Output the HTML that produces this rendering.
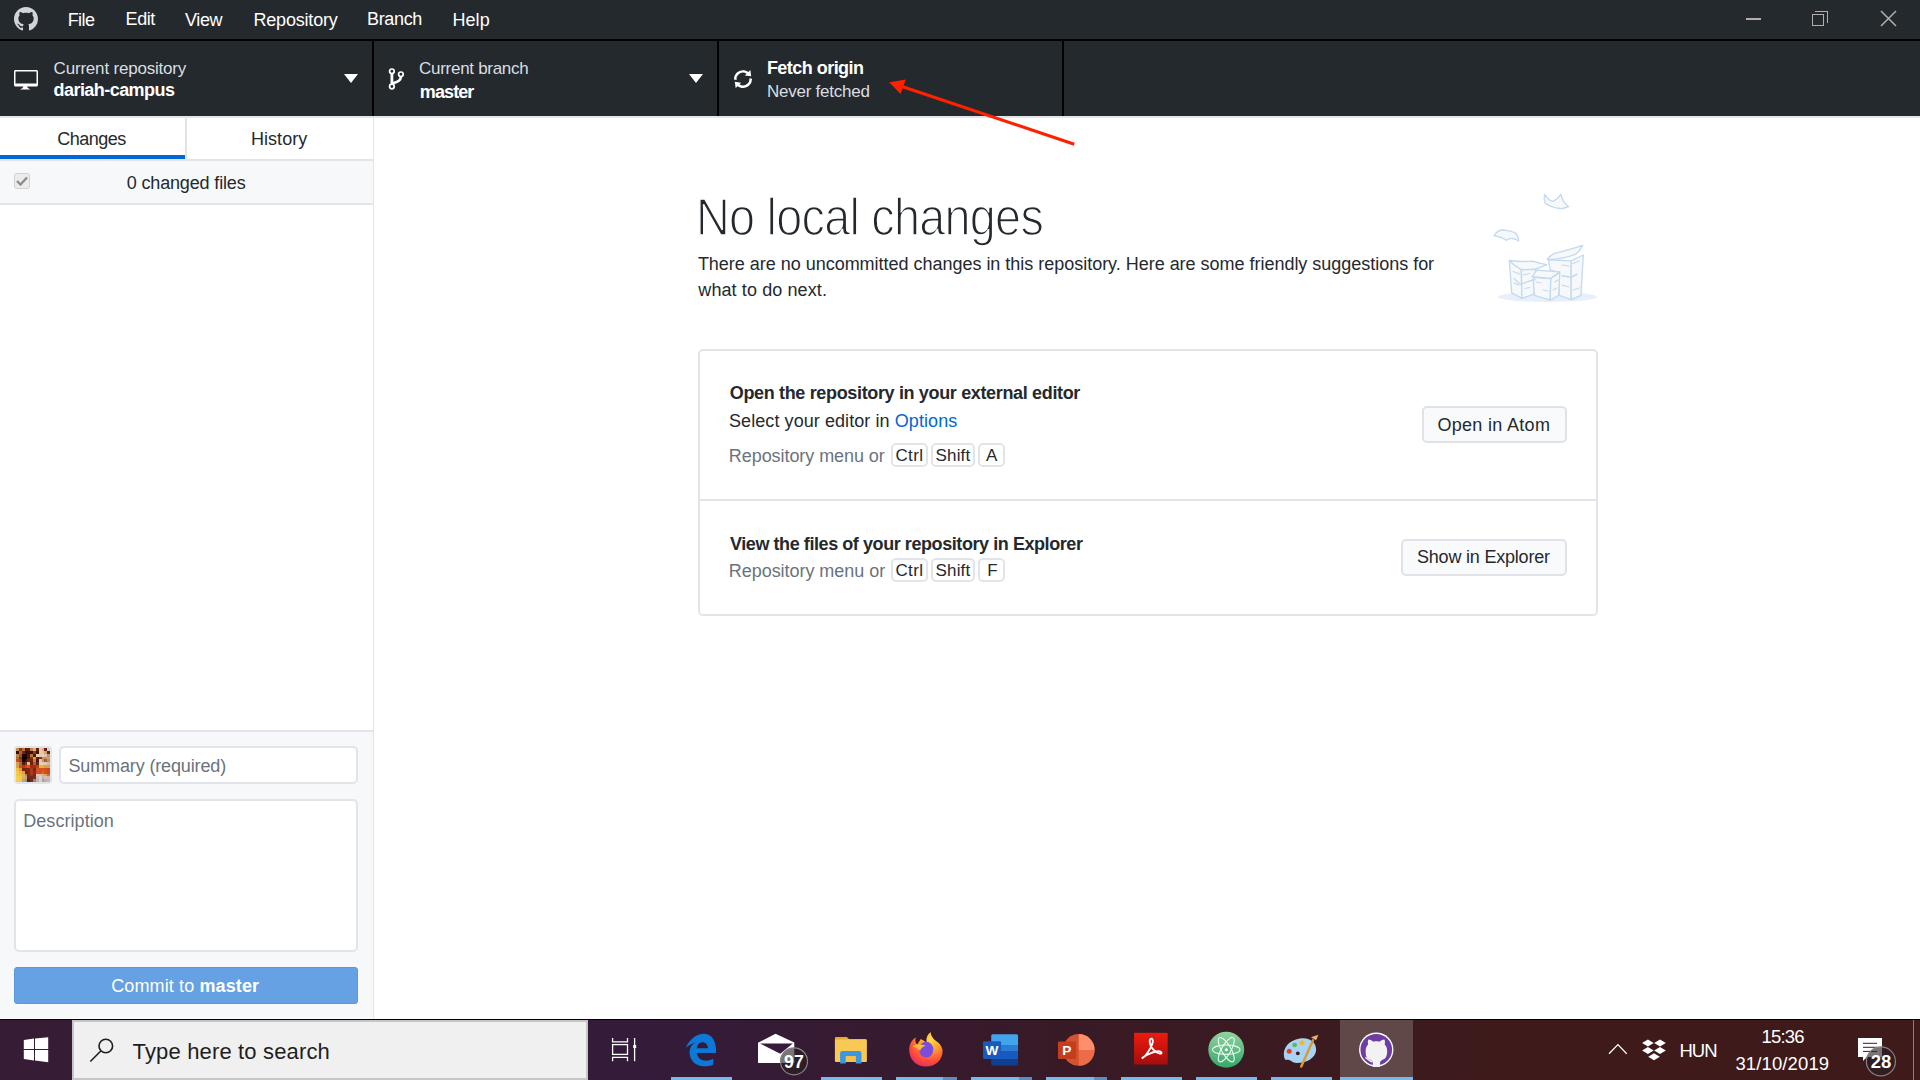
<!DOCTYPE html>
<html><head><meta charset="utf-8">
<style>
*{margin:0;padding:0;box-sizing:border-box}
html,body{width:1920px;height:1080px;overflow:hidden;background:#fff;font-family:"Liberation Sans",sans-serif}
.a{position:absolute;white-space:nowrap;line-height:1}
.r{position:absolute}
.menu{color:#fff;font-size:18.5px}
.tt1{color:#dadee2;font-size:17px}
.tt2{color:#fff;font-size:18.5px;font-weight:bold}
.dk{color:#24292e;font-size:18.5px}
.gr{color:#6a737d;font-size:18.5px}
.kbd{position:absolute;border:2px solid #e1e4e8;border-radius:5px;background:#fff}
.btn{position:absolute;border:2px solid #dfe2e6;border-radius:5px;background:#f9fafb}
.uline{position:absolute;top:1077px;height:3px;background:#76b9ed}
.uline2{position:absolute;top:1077px;height:3px;background:#5b8dc4}
</style></head><body>
<!-- title bar -->
<div class="r" style="left:0;top:0;width:1920px;height:39px;background:#24292e"></div>
<div class="r" style="left:0;top:39px;width:1920px;height:2px;background:#000"></div>
<!-- toolbar -->
<div class="r" style="left:0;top:41px;width:1920px;height:75px;background:#24292e"></div>
<div class="r" style="left:372px;top:41px;width:2px;height:75px;background:#000"></div>
<div class="r" style="left:717px;top:41px;width:2px;height:75px;background:#000"></div>
<div class="r" style="left:1062px;top:41px;width:2px;height:75px;background:#000"></div>
<div class="r" style="left:0;top:116px;width:1920px;height:2px;background:#e1e4e8"></div>

<!-- github logo -->
<svg class="r" style="left:14px;top:7px" width="24" height="24" viewBox="0 0 16 16"><path fill="#d1d5da" d="M8 0C3.58 0 0 3.58 0 8c0 3.54 2.29 6.53 5.47 7.59.4.07.55-.17.55-.38 0-.19-.01-.82-.01-1.49-2.01.37-2.53-.49-2.69-.94-.09-.23-.48-.94-.82-1.13-.28-.15-.68-.52-.01-.53.63-.01 1.080.58 1.23.82.72 1.21 1.87.87 2.33.66.07-.52.28-.87.51-1.07-1.78-.2-3.64-.89-3.64-3.95 0-.87.31-1.59.82-2.15-.08-.2-.36-1.02.08-2.12 0 0 .67-.21 2.2.82.64-.18 1.32-.27 2-.27.68 0 1.36.09 2 .27 1.53-1.04 2.2-.82 2.2-.82.44 1.1.16 1.92.08 2.12.51.56.82 1.27.82 2.15 0 3.07-1.87 3.750-3.65 3.95.29.25.54.73.54 1.48 0 1.070-.01 1.93-.01 2.2 0 .21.15.46.55.38A8.013 8.013 0 0016 8c0-4.42-3.58-8-8-8z"></path></svg>

<div class="a menu" style="left: 67.7px; top: 10.9px; letter-spacing: -0.6px; font-size: 18px; visibility: visible;">File</div>
<div class="a menu" style="left: 125.6px; top: 10.45px; letter-spacing: -0.44px; font-size: 18px; visibility: visible;">Edit</div>
<div class="a menu" style="left: 185px; top: 11.2px; letter-spacing: -0.367px; font-size: 18px; visibility: visible;">View</div>
<div class="a menu" style="left: 253.5px; top: 10.6px; letter-spacing: -0.199px; font-size: 18px; visibility: visible;">Repository</div>
<div class="a menu" style="left: 367px; top: 10.45px; letter-spacing: -0.348px; font-size: 18px; visibility: visible;">Branch</div>
<div class="a menu" style="left: 452.5px; top: 10.85px; letter-spacing: 0.05px; font-size: 18px; visibility: visible;">Help</div>

<!-- window controls -->
<div class="r" style="left:1746px;top:18px;width:15px;height:2px;background:#b4adad"></div>
<div class="r" style="left:1812px;top:14px;width:12px;height:12px;border:1.5px solid #b4adad"></div>
<div class="r" style="left:1815px;top:11px;width:13px;height:12px;border-top:1.5px solid #b4adad;border-right:1.5px solid #b4adad"></div>
<svg class="r" style="left:1880px;top:10px" width="17" height="17" viewBox="0 0 17 17"><path d="M1 1L16 16M16 1L1 16" stroke="#b4adad" stroke-width="1.5"></path></svg>

<!-- toolbar items -->
<svg class="r" style="left:14px;top:67px" width="24" height="24" viewBox="0 0 16 16"><path fill="#fff" d="M15 2H1c-.55 0-1 .45-1 1v9c0 .55.45 1 1 1h5.34c-.25.61-.86 1.390-2.34 2h7c-1.48-.61-2.09-1.39-2.34-2H15c.55 0 1-.45 1-1V3c0-.55-.45-1-1-1zm0 9H1V3h14v8z"></path></svg>
<div class="a tt1" style="left: 53.6px; top: 60px; letter-spacing: -0.196px; visibility: visible;">Current repository</div>
<div class="a tt2" style="left: 53.6px; top: 81.35px; letter-spacing: -0.56px; font-size: 18px; visibility: visible;">dariah-campus</div>
<svg class="r" style="left:344px;top:74px" width="14" height="9" viewBox="0 0 14 9"><path d="M0 0L14 0L7 9Z" fill="#fff"></path></svg>

<svg class="r" style="left:380px;top:60px" width="40" height="40" viewBox="380 60 40 40"><g fill="none" stroke="#fff"><circle cx="391.9" cy="71.3" r="2.3" stroke-width="1.7"></circle><circle cx="400.9" cy="74.3" r="2.3" stroke-width="1.7"></circle><circle cx="391.9" cy="86.5" r="2.3" stroke-width="1.7"></circle><path d="M391.9,73.5V84.3" stroke-width="2.8"></path><path d="M400.9,76.5C400.9,81 397,81.8 392.2,83.5" stroke-width="2.6"></path></g></svg>
<div class="a tt1" style="left: 419.1px; top: 59.85px; letter-spacing: -0.292px; visibility: visible;">Current branch</div>
<div class="a tt2" style="left: 419.8px; top: 82.7px; letter-spacing: -0.894px; font-size: 18px; visibility: visible;">master</div>
<svg class="r" style="left:689px;top:74px" width="14" height="9" viewBox="0 0 14 9"><path d="M0 0L14 0L7 9Z" fill="#fff"></path></svg>

<svg class="r" style="left:734px;top:70px" width="18" height="19" viewBox="0 0 12 12.6"><path fill="#fff" d="M10.24 5.4a4.15 4.15 0 01-1.2 3.6 4.346 4.346 0 01-5.41.54L4.8 8.4.5 7.8l.6 4.2 1.31-1.26c2.360 1.74 5.7 1.57 7.84-.54a5.876 5.876 0 001.74-4.46l-1.75-.34zM2.96 3a4.346 4.346 0 015.41-.54L7.2 3.6l4.3.6-.6-4.2-1.31 1.26c-2.36-1.74-5.7-1.57-7.85.54C.5 3.03-.06 4.65.01 6.26l1.75.35A4.17 4.17 0 012.96 3z"></path></svg>
<div class="a tt2" style="left: 766.9px; top: 59.12px; letter-spacing: -0.532px; font-size: 18px; visibility: visible;">Fetch origin</div>
<div class="a tt1" style="left: 766.9px; top: 83.45px; letter-spacing: -0.231px; visibility: visible;">Never fetched</div>

<!-- red arrow -->
<svg class="r" style="left:880px;top:70px" width="210" height="90" viewBox="880 70 210 90"><path d="M1074.3,144.2L902,86.5" stroke="#fd2100" stroke-width="3.1" stroke-linecap="butt"></path><path d="M889.1,82.2L905.8,79.4L900.6,93.9Z" fill="#fd2100"></path></svg>

<!-- sidebar -->
<div class="r" style="left:373px;top:117px;width:1px;height:902px;background:#e1e4e8"></div>
<div class="r" style="left:185px;top:118px;width:2px;height:41px;background:#e1e4e8"></div>
<div class="r" style="left:0;top:155px;width:185px;height:4px;background:#0366d6"></div>
<div class="r" style="left:0;top:159px;width:373px;height:2px;background:#e1e4e8"></div>
<div class="a dk" style="left: 57.2px; top: 130px; letter-spacing: -0.49px; font-size: 18px; visibility: visible;">Changes</div>
<div class="a dk" style="left: 251px; top: 130px; letter-spacing: 0.04px; font-size: 18px; visibility: visible;">History</div>
<div class="r" style="left:0;top:161px;width:373px;height:42px;background:#f6f8fa"></div>
<div class="r" style="left:0;top:203px;width:373px;height:2px;background:#e1e4e8"></div>
<div class="r" style="left:14px;top:173px;width:16px;height:16px;border:1px solid #cfd3d7;border-radius:3px;background:#ececec"></div>
<svg class="r" style="left:16px;top:176px" width="12" height="10" viewBox="0 0 12 10"><path d="M1 5L4.5 8.5L11 1.5" stroke="#8d8d8d" stroke-width="2.4" fill="none"></path></svg>
<div class="a dk" style="left: 126.7px; top: 173.55px; letter-spacing: -0.146px; font-size: 18px; visibility: visible;">0 changed files</div>

<!-- commit area -->
<div class="r" style="left:0;top:730px;width:373px;height:2px;background:#e1e4e8"></div>
<div class="r" style="left:0;top:732px;width:373px;height:286px;background:#f6f8fa"></div>
<div class="r" style="left:14px;top:746px;width:38px;height:38px;border:2px solid #e1e4e8;border-radius:4px;background:#fff"></div><svg class="r" style="left:16px;top:748px;filter:blur(0.6px)" width="34" height="34" viewBox="0 0 12 12" preserveAspectRatio="none" shape-rendering="crispEdges"><rect x="0" y="0" width="1" height="1" fill="#c89050"></rect><rect x="1" y="0" width="1" height="1" fill="#8a3a20"></rect><rect x="2" y="0" width="1" height="1" fill="#c07030"></rect><rect x="3" y="0" width="1" height="1" fill="#4a1a10"></rect><rect x="4" y="0" width="1" height="1" fill="#5a2010"></rect><rect x="5" y="0" width="1" height="1" fill="#c08050"></rect><rect x="6" y="0" width="1" height="1" fill="#e0b080"></rect><rect x="7" y="0" width="1" height="1" fill="#5a2010"></rect><rect x="8" y="0" width="1" height="1" fill="#e8c8a0"></rect><rect x="9" y="0" width="1" height="1" fill="#d8b090"></rect><rect x="10" y="0" width="1" height="1" fill="#6a2010"></rect><rect x="11" y="0" width="1" height="1" fill="#e0d0c0"></rect><rect x="0" y="1" width="1" height="1" fill="#2a1008"></rect><rect x="1" y="1" width="1" height="1" fill="#b06830"></rect><rect x="2" y="1" width="1" height="1" fill="#6a2a18"></rect><rect x="3" y="1" width="1" height="1" fill="#3a1008"></rect><rect x="4" y="1" width="1" height="1" fill="#3a1008"></rect><rect x="5" y="1" width="1" height="1" fill="#3a1008"></rect><rect x="6" y="1" width="1" height="1" fill="#8a3a20"></rect><rect x="7" y="1" width="1" height="1" fill="#3a1010"></rect><rect x="8" y="1" width="1" height="1" fill="#e8c8a0"></rect><rect x="9" y="1" width="1" height="1" fill="#e8c8a0"></rect><rect x="10" y="1" width="1" height="1" fill="#d0a070"></rect><rect x="11" y="1" width="1" height="1" fill="#6a2010"></rect><rect x="0" y="2" width="1" height="1" fill="#c08040"></rect><rect x="1" y="2" width="1" height="1" fill="#a05020"></rect><rect x="2" y="2" width="1" height="1" fill="#200505"></rect><rect x="3" y="2" width="1" height="1" fill="#200505"></rect><rect x="4" y="2" width="1" height="1" fill="#4a1810"></rect><rect x="5" y="2" width="1" height="1" fill="#c07030"></rect><rect x="6" y="2" width="1" height="1" fill="#4a1810"></rect><rect x="7" y="2" width="1" height="1" fill="#e8d0b0"></rect><rect x="8" y="2" width="1" height="1" fill="#e8c8b0"></rect><rect x="9" y="2" width="1" height="1" fill="#f0c8c0"></rect><rect x="10" y="2" width="1" height="1" fill="#e0c0a0"></rect><rect x="11" y="2" width="1" height="1" fill="#c09070"></rect><rect x="0" y="3" width="1" height="1" fill="#b07030"></rect><rect x="1" y="3" width="1" height="1" fill="#902818"></rect><rect x="2" y="3" width="1" height="1" fill="#100000"></rect><rect x="3" y="3" width="1" height="1" fill="#100000"></rect><rect x="4" y="3" width="1" height="1" fill="#4a1810"></rect><rect x="5" y="3" width="1" height="1" fill="#8a3018"></rect><rect x="6" y="3" width="1" height="1" fill="#e0a030"></rect><rect x="7" y="3" width="1" height="1" fill="#5a2010"></rect><rect x="8" y="3" width="1" height="1" fill="#7a3020"></rect><rect x="9" y="3" width="1" height="1" fill="#c09070"></rect><rect x="10" y="3" width="1" height="1" fill="#c89060"></rect><rect x="11" y="3" width="1" height="1" fill="#d0a060"></rect><rect x="0" y="4" width="1" height="1" fill="#c05028"></rect><rect x="1" y="4" width="1" height="1" fill="#a04020"></rect><rect x="2" y="4" width="1" height="1" fill="#100000"></rect><rect x="3" y="4" width="1" height="1" fill="#3a1008"></rect><rect x="4" y="4" width="1" height="1" fill="#6a2810"></rect><rect x="5" y="4" width="1" height="1" fill="#6a2810"></rect><rect x="6" y="4" width="1" height="1" fill="#c08040"></rect><rect x="7" y="4" width="1" height="1" fill="#4a1810"></rect><rect x="8" y="4" width="1" height="1" fill="#e0c8b0"></rect><rect x="9" y="4" width="1" height="1" fill="#c09060"></rect><rect x="10" y="4" width="1" height="1" fill="#a06040"></rect><rect x="11" y="4" width="1" height="1" fill="#c09060"></rect><rect x="0" y="5" width="1" height="1" fill="#d8a050"></rect><rect x="1" y="5" width="1" height="1" fill="#b07030"></rect><rect x="2" y="5" width="1" height="1" fill="#5a1a10"></rect><rect x="3" y="5" width="1" height="1" fill="#7a3018"></rect><rect x="4" y="5" width="1" height="1" fill="#e8c070"></rect><rect x="5" y="5" width="1" height="1" fill="#6a2010"></rect><rect x="6" y="5" width="1" height="1" fill="#b06030"></rect><rect x="7" y="5" width="1" height="1" fill="#6a2010"></rect><rect x="8" y="5" width="1" height="1" fill="#e0d0c0"></rect><rect x="9" y="5" width="1" height="1" fill="#e8d0b0"></rect><rect x="10" y="5" width="1" height="1" fill="#e0c8a8"></rect><rect x="11" y="5" width="1" height="1" fill="#d8b890"></rect><rect x="0" y="6" width="1" height="1" fill="#e0a040"></rect><rect x="1" y="6" width="1" height="1" fill="#b06030"></rect><rect x="2" y="6" width="1" height="1" fill="#c03020"></rect><rect x="3" y="6" width="1" height="1" fill="#e04020"></rect><rect x="4" y="6" width="1" height="1" fill="#e05030"></rect><rect x="5" y="6" width="1" height="1" fill="#c02010"></rect><rect x="6" y="6" width="1" height="1" fill="#c02010"></rect><rect x="7" y="6" width="1" height="1" fill="#a05020"></rect><rect x="8" y="6" width="1" height="1" fill="#e8b030"></rect><rect x="9" y="6" width="1" height="1" fill="#e8b030"></rect><rect x="10" y="6" width="1" height="1" fill="#d8a050"></rect><rect x="11" y="6" width="1" height="1" fill="#d0a070"></rect><rect x="0" y="7" width="1" height="1" fill="#f5c040"></rect><rect x="1" y="7" width="1" height="1" fill="#e0a030"></rect><rect x="2" y="7" width="1" height="1" fill="#7a2010"></rect><rect x="3" y="7" width="1" height="1" fill="#7a2810"></rect><rect x="4" y="7" width="1" height="1" fill="#7a2810"></rect><rect x="5" y="7" width="1" height="1" fill="#a04020"></rect><rect x="6" y="7" width="1" height="1" fill="#7a2818"></rect><rect x="7" y="7" width="1" height="1" fill="#d85020"></rect><rect x="8" y="7" width="1" height="1" fill="#d85020"></rect><rect x="9" y="7" width="1" height="1" fill="#d85020"></rect><rect x="10" y="7" width="1" height="1" fill="#d05020"></rect><rect x="11" y="7" width="1" height="1" fill="#c84820"></rect><rect x="0" y="8" width="1" height="1" fill="#f8c848"></rect><rect x="1" y="8" width="1" height="1" fill="#f0b840"></rect><rect x="2" y="8" width="1" height="1" fill="#e0a040"></rect><rect x="3" y="8" width="1" height="1" fill="#6a2010"></rect><rect x="4" y="8" width="1" height="1" fill="#7a2810"></rect><rect x="5" y="8" width="1" height="1" fill="#c03020"></rect><rect x="6" y="8" width="1" height="1" fill="#8a3018"></rect><rect x="7" y="8" width="1" height="1" fill="#d85020"></rect><rect x="8" y="8" width="1" height="1" fill="#d05020"></rect><rect x="9" y="8" width="1" height="1" fill="#e06030"></rect><rect x="10" y="8" width="1" height="1" fill="#d05020"></rect><rect x="11" y="8" width="1" height="1" fill="#c84820"></rect><rect x="0" y="9" width="1" height="1" fill="#f8c848"></rect><rect x="1" y="9" width="1" height="1" fill="#f0c040"></rect><rect x="2" y="9" width="1" height="1" fill="#e8b040"></rect><rect x="3" y="9" width="1" height="1" fill="#c08060"></rect><rect x="4" y="9" width="1" height="1" fill="#7a2810"></rect><rect x="5" y="9" width="1" height="1" fill="#a03020"></rect><rect x="6" y="9" width="1" height="1" fill="#7a2818"></rect><rect x="7" y="9" width="1" height="1" fill="#e0c8b0"></rect><rect x="8" y="9" width="1" height="1" fill="#d8c0b0"></rect><rect x="9" y="9" width="1" height="1" fill="#d0b0a0"></rect><rect x="10" y="9" width="1" height="1" fill="#e0a040"></rect><rect x="11" y="9" width="1" height="1" fill="#c87040"></rect><rect x="0" y="10" width="1" height="1" fill="#f8d050"></rect><rect x="1" y="10" width="1" height="1" fill="#f8c848"></rect><rect x="2" y="10" width="1" height="1" fill="#d8b060"></rect><rect x="3" y="10" width="1" height="1" fill="#c0a090"></rect><rect x="4" y="10" width="1" height="1" fill="#6a2818"></rect><rect x="5" y="10" width="1" height="1" fill="#7a2818"></rect><rect x="6" y="10" width="1" height="1" fill="#7a3020"></rect><rect x="7" y="10" width="1" height="1" fill="#d0b8b0"></rect><rect x="8" y="10" width="1" height="1" fill="#e0d0c8"></rect><rect x="9" y="10" width="1" height="1" fill="#c0b0b0"></rect><rect x="10" y="10" width="1" height="1" fill="#d8c0b0"></rect><rect x="11" y="10" width="1" height="1" fill="#c8b8b0"></rect><rect x="0" y="11" width="1" height="1" fill="#f8d050"></rect><rect x="1" y="11" width="1" height="1" fill="#f0c848"></rect><rect x="2" y="11" width="1" height="1" fill="#c0a090"></rect><rect x="3" y="11" width="1" height="1" fill="#a09090"></rect><rect x="4" y="11" width="1" height="1" fill="#5a2018"></rect><rect x="5" y="11" width="1" height="1" fill="#6a3020"></rect><rect x="6" y="11" width="1" height="1" fill="#a08080"></rect><rect x="7" y="11" width="1" height="1" fill="#c0b0b0"></rect><rect x="8" y="11" width="1" height="1" fill="#e0d0c0"></rect><rect x="9" y="11" width="1" height="1" fill="#a0a0b0"></rect><rect x="10" y="11" width="1" height="1" fill="#c0b0a8"></rect><rect x="11" y="11" width="1" height="1" fill="#c8b8b0"></rect></svg>
<div class="r" style="left:59px;top:746px;width:299px;height:38px;border:2px solid #e1e4e8;border-radius:5px;background:#fff"></div>
<div class="a gr" style="left: 68.5px; top: 757.05px; letter-spacing: -0.139px; font-size: 18px; visibility: visible;">Summary (required)</div>
<div class="r" style="left:14px;top:799px;width:344px;height:153px;border:2px solid #e1e4e8;border-radius:5px;background:#fff"></div>
<div class="a gr" style="left: 23.2px; top: 812.2px; letter-spacing: 0.062px; font-size: 18px; visibility: visible;">Description</div>
<div class="r" style="left:14px;top:967px;width:344px;height:37px;border-radius:3px;background:#66a1e3;border:1px solid #5c98e0"></div>
<div class="a" style="left: 111.2px; top: 977.2px; letter-spacing: 0.119px; color: rgb(255, 255, 255); font-size: 18px; visibility: visible;">Commit to <b>master</b></div>
<div class="r" style="left:0;top:1019px;width:1920px;height:1px;background:#000"></div>

<!-- main content -->
<div class="a" style="left:696.1px;top:192.4px;letter-spacing:-0.8px;color:#24292e;font-size:51px;transform-origin:0 0;transform:scaleX(0.917);-webkit-text-stroke:1.5px #fff">No local changes</div>
<div class="a dk" style="left: 697.9px; top: 254.55px; letter-spacing: -0.02px; font-size: 18px; visibility: visible;">There are no uncommitted changes in this repository. Here are some friendly suggestions for</div>
<div class="a dk" style="left: 698.3px; top: 281.05px; letter-spacing: 0.101px; font-size: 18px; visibility: visible;">what to do next.</div>

<div class="r" style="left:698px;top:349px;width:900px;height:267px;border:2px solid #e1e4e8;border-radius:5px"></div>
<div class="r" style="left:700px;top:499px;width:896px;height:2px;background:#e1e4e8"></div>

<div class="a dk" style="left: 729.8px; top: 383.7px; letter-spacing: -0.346px; font-weight: bold; font-size: 18px; visibility: visible;">Open the repository in your external editor</div>
<div class="a dk" style="left: 729px; top: 412.3px; letter-spacing: 0.075px; font-size: 18px; visibility: visible;">Select your editor in <span style="color:#0366d6">Options</span></div>
<div class="a gr" style="left: 728.8px; top: 447px; letter-spacing: -0.064px; font-size: 18px; visibility: visible;">Repository menu or</div>
<div class="kbd" style="left:891px;top:443px;width:37px;height:24px"></div>
<div class="kbd" style="left:931px;top:443px;width:44px;height:24px"></div>
<div class="kbd" style="left:978px;top:443px;width:27px;height:24px"></div>
<div class="a" style="left:895.4px;top:447.2px;color:#24292e;font-size:17px;letter-spacing:0.4px">Ctrl</div>
<div class="a" style="left:935.6px;top:447.2px;color:#24292e;font-size:17px;letter-spacing:0.15px">Shift</div>
<div class="a" style="left:986px;top:447.2px;color:#24292e;font-size:17px">A</div>
<div class="btn" style="left:1422px;top:406px;width:145px;height:37px"></div>
<div class="a dk" style="left: 1437.4px; top: 416.3px; letter-spacing: 0.311px; font-size: 18px; visibility: visible;">Open in Atom</div>

<div class="a dk" style="left: 730px; top: 534.55px; letter-spacing: -0.428px; font-weight: bold; font-size: 18px; visibility: visible;">View the files of your repository in Explorer</div>
<div class="a gr" style="left: 728.8px; top: 561.9px; letter-spacing: -0.043px; font-size: 18px; visibility: visible;">Repository menu or</div>
<div class="kbd" style="left:891px;top:558px;width:37px;height:24px"></div>
<div class="kbd" style="left:931px;top:558px;width:44px;height:24px"></div>
<div class="kbd" style="left:978px;top:558px;width:27px;height:24px"></div>
<div class="a" style="left:895.4px;top:562.1px;color:#24292e;font-size:17px;letter-spacing:0.4px">Ctrl</div>
<div class="a" style="left:935.6px;top:562.1px;color:#24292e;font-size:17px;letter-spacing:0.15px">Shift</div>
<div class="a" style="left:987.3px;top:562.1px;color:#24292e;font-size:17px">F</div>
<div class="btn" style="left:1401px;top:538.5px;width:166px;height:37px"></div>
<div class="a dk" style="left: 1417px; top: 548.4px; letter-spacing: -0.204px; font-size: 18px; visibility: visible;">Show in Explorer</div>


<!-- illustration -->
<svg class="r" style="left:1480px;top:180px" width="130" height="130" viewBox="1480 180 130 130">
<ellipse cx="1547.5" cy="296.9" rx="49.6" ry="5.1" fill="#e7f0fa"></ellipse>
<g fill="#f6f8fa" stroke="#c3d9ef" stroke-width="1.3" stroke-linejoin="round">
<path d="M1548.4,259.9 L1571.2,260.8 L1571.2,299.6 L1559.2,295.4 L1558.6,272.5 L1550.2,270.1Z"></path>
<path d="M1571.2,260.8 L1583.3,255.0 L1580.9,295.4 L1571.2,299.6Z"></path>
<path d="M1547.2,259.3 Q1552,253 1558.6,252.3 Q1572,249 1582.7,245.4 Q1580,251 1575.4,254.4 Q1560,260 1547.2,259.3Z"></path>
<path d="M1509.3,260.5 L1511.7,292.9 L1521.9,298.4 L1521.3,269.5Z"></path>
<path d="M1521.3,269.5 L1521.9,298.4 L1533.9,294.2 L1535.7,269.5Z"></path>
<path d="M1509.3,260.5 Q1521,262 1532.7,261.2 Q1540,263.5 1546.6,264.7 Q1540,268 1535.7,268.9 Q1528,269.8 1521.3,269.5 Q1514,266 1509.3,260.5Z"></path>
<path d="M1533.0,277.3 L1534.5,295.4 L1550.2,300.2 L1550.8,278.5Z"></path>
<path d="M1550.8,278.5 L1559.8,272.5 L1558.6,295.4 L1550.2,300.2Z"></path>
<path d="M1532.1,276.7 L1536.9,270.1 L1559.8,271.9 L1550.2,278.5Z"></path>
<path d="M1544.6,194.3 Q1549,201 1553,201.4 Q1558,199 1560.8,194.3 Q1563,203 1568.6,206.6 Q1562,209 1559.5,208.5 Q1551,207.5 1545.2,203.3 Q1543.5,199 1544.6,194.3Z"></path>
<path d="M1494,235.8 Q1497,230.5 1502.4,230 Q1510,230.5 1514.7,232.5 Q1518.5,235.5 1518.6,241 Q1512,236 1506.3,240.3 Q1501,236.5 1494,235.8Z"></path>
</g>
<g stroke="#c3d9ef" stroke-width="1.1" fill="none" stroke-linecap="round">
<path d="M1513,271.5L1520,274M1523,275L1530,273.5M1514,283L1519,285M1525,288.5L1530,287.5M1536,282L1541,283M1543,290L1548,291M1553,290L1557,288M1562,265L1569,266M1573,263.5L1579,261M1562,276L1569,277M1573,276L1577,274M1562,285L1569,287M1573,290L1579,288M1555,282L1558,280"></path><path d="M1514.1,278.5Q1518,283 1521.3,284.5Q1528,281 1535.7,279.7M1562.2,275.5L1571.5,277.3L1576.6,274.6" stroke-width="1.2"></path>
</g>
</svg>

<!-- taskbar -->
<div class="r" style="left:0;top:1020px;width:1920px;height:60px;background:linear-gradient(90deg,#371c35 0%,#351b38 20%,#341b3b 34%,#381a27 55%,#3e1a1b 78%,#3e1a1b 100%)"></div>
<div class="r" style="left:72px;top:1020px;width:516px;height:60px;background:#f0f0f0;border:2px solid #c6c6c6;border-right-width:2px"></div>

<!-- taskbar icons -->
<svg class="r" style="left:0;top:1020px" width="1920" height="60" viewBox="0 1020 1920 60">
<!-- windows logo -->
<g fill="#fff">
<path d="M23.8,1040 L34,1038.6 L34,1049 L23.8,1049Z"></path>
<path d="M35,1038.4 L48.2,1037.2 L48.2,1049 L35,1049Z"></path>
<path d="M23.8,1050 L34,1050 L34,1060.4 L23.8,1059Z"></path>
<path d="M35,1050 L48.2,1050 L48.2,1062.2 L35,1060.6Z"></path>
</g>
<!-- search icon -->
<g fill="none" stroke="#1e1e1e" stroke-width="1.6"><circle cx="105.8" cy="1046" r="6.8"></circle><path d="M100.8,1051 L90.3,1061.5"></path></g>
<!-- task view -->
<g fill="none" stroke="#fff" stroke-width="1.3">
<path d="M612.6,1038 V1041.8 H627.5 V1038"></path>
<rect x="612.6" y="1044.6" width="14.9" height="9.8"></rect>
<path d="M612.6,1061.2 V1057.4 H627.5 V1061.2"></path>
<path d="M634.6,1038 V1061.2"></path>
</g>
<rect x="633.2" y="1045" width="3" height="3" fill="#fff"></rect>
<!-- underlines -->
<g fill="#76b9ed">
<rect x="671" y="1077" width="61" height="3"></rect>
<rect x="821" y="1077" width="61" height="3"></rect>
<rect x="896" y="1077" width="47" height="3"></rect>
<rect x="971" y="1077" width="48" height="3"></rect>
<rect x="1046" y="1077" width="48" height="3"></rect>
<rect x="1121" y="1077" width="61" height="3"></rect>
<rect x="1196" y="1077" width="61" height="3"></rect>
<rect x="1271" y="1077" width="61" height="3"></rect>
<rect x="1340" y="1077" width="73" height="3"></rect>
</g>
<g fill="#5d8cc0">
<rect x="943" y="1077" width="14" height="3"></rect>
<rect x="1019" y="1077" width="13" height="3"></rect>
<rect x="1094" y="1077" width="13" height="3"></rect>
</g>
<rect x="1340" y="1020" width="73" height="57" fill="#614848"></rect>
<!-- edge -->
<g transform="translate(675,1025) scale(0.10417)">
<path fill="#0c78d8" fill-rule="evenodd" d="M105,215 C150,120 220,85 280,85 C360,88 398,160 395,268 L212,268 C215,320 255,342 300,342 C330,342 350,335 368,322 L368,378 C340,392 310,396 280,396 C190,396 140,330 140,262 C140,215 165,180 210,160 C170,175 130,195 105,215Z M208,222 L318,222 C312,185 290,165 262,165 C235,165 214,185 208,222Z"></path>
</g>
<!-- mail -->
<g transform="translate(675,1025) scale(0.10417)">
<path fill="#fff" d="M797,170 L965,85 L1145,168 L1145,365 L797,365Z"></path>
<path fill="#361b3b" d="M815,178 L1130,178 L1010,275Z"></path>
<circle cx="1142" cy="349" r="130" fill="#262122" fill-opacity="0.62" stroke="#8a8585" stroke-width="11"></circle>
<text x="1142" y="411" font-family="Liberation Sans" font-weight="bold" font-size="170" fill="#fff" text-anchor="middle">97</text>
</g>
<!-- explorer -->
<g transform="translate(675,1025) scale(0.10417)">
<path fill="#e6a92c" d="M1535,125 Q1535,115 1545,115 L1650,115 L1670,135 L1835,135 L1840,160 L1535,160Z"></path>
<rect x="1535" y="140" width="307" height="215" rx="10" fill="#f8ca55"></rect>
<path fill="#3a98e0" d="M1585,370 L1585,270 Q1585,250 1605,250 L1770,250 Q1790,250 1790,270 L1790,370 L1735,370 L1735,300 L1640,300 L1640,370Z"></path>
<rect x="1640" y="298" width="95" height="52" fill="#f5c04a"></rect>
</g>
<!-- firefox -->
<g transform="translate(895,1025) scale(0.10937)">
<defs>
<radialGradient id="ffg" cx="0.65" cy="0.2" r="0.9"><stop offset="0" stop-color="#ffe14a"></stop><stop offset="0.35" stop-color="#ffa02e"></stop><stop offset="0.7" stop-color="#ff4f3a"></stop><stop offset="1" stop-color="#e5216a"></stop></radialGradient>
</defs>
<path fill="url(#ffg)" d="M282,380 C190,380 130,310 130,228 C130,180 150,140 190,115 C180,150 190,170 205,180 C215,150 240,130 235,125 C260,140 270,150 290,160 C280,120 300,85 325,65 C330,110 360,140 395,160 C425,190 435,215 435,240 C435,320 370,380 282,380Z"></path>
<ellipse cx="285" cy="225" rx="65" ry="72" fill="#7b4ddc"></ellipse>
<path fill="#ffb93a" d="M160,200 C185,170 220,170 280,190 C250,200 235,215 230,235 C210,215 185,205 160,200Z"></path>
</g>
<!-- word -->
<g transform="translate(895,1025) scale(0.10937)">
<defs><linearGradient id="wdg" x1="0" y1="0" x2="0" y2="1"><stop offset="0" stop-color="#41a5ee"></stop><stop offset="0.33" stop-color="#41a5ee"></stop><stop offset="0.33" stop-color="#2b7cd3"></stop><stop offset="0.55" stop-color="#2b7cd3"></stop><stop offset="0.55" stop-color="#185abd"></stop><stop offset="0.78" stop-color="#185abd"></stop><stop offset="0.78" stop-color="#103f91"></stop><stop offset="1" stop-color="#103f91"></stop></linearGradient></defs>
<rect x="880" y="85" width="245" height="285" rx="14" fill="url(#wdg)"></rect>
<rect x="805" y="148" width="165" height="162" rx="10" fill="#185abd"></rect>
<text x="887" y="270" font-family="Liberation Sans" font-weight="bold" font-size="125" fill="#fff" text-anchor="middle">W</text>
</g>
<!-- powerpoint -->
<g transform="translate(895,1025) scale(0.10937)">
<circle cx="1680" cy="228" r="145" fill="#d35230"></circle>
<path d="M1680,83 A145,145 0 0 1 1825,228 L1680,228Z" fill="#ff8f6b"></path>
<path d="M1680,228 L1825,228 A145,145 0 0 1 1680,373Z" fill="#ed6c47"></path>
<rect x="1490" y="150" width="165" height="162" rx="10" fill="#c43e1c"></rect>
<text x="1572" y="272" font-family="Liberation Sans" font-weight="bold" font-size="125" fill="#fff" text-anchor="middle">P</text>
</g>
<!-- acrobat, atom, paint, github -->
<g transform="translate(1120,1020) scale(0.15625)">
<defs>
<linearGradient id="acg" x1="0" y1="0" x2="0" y2="1"><stop offset="0" stop-color="#ee1b0e"></stop><stop offset="1" stop-color="#a50d0d"></stop></linearGradient>
<linearGradient id="atg" x1="0" y1="0" x2="0" y2="1"><stop offset="0" stop-color="#8fd3a0"></stop><stop offset="1" stop-color="#35a86a"></stop></linearGradient>
</defs>
<rect x="90" y="82" width="215" height="203" fill="url(#acg)"></rect>
<path fill="none" stroke="#fff" stroke-width="12" d="M140,245 C165,235 205,170 210,140 C212,110 190,115 190,140 C192,175 225,210 255,215 C275,218 265,195 240,200 C200,205 150,235 140,245Z"></path>
<circle cx="680" cy="190" r="115" fill="url(#atg)"></circle>
<g fill="none" stroke="#fff" stroke-width="7" opacity="0.92">
<ellipse cx="680" cy="190" rx="88" ry="30"></ellipse>
<ellipse cx="680" cy="190" rx="88" ry="30" transform="rotate(60 680 190)"></ellipse>
<ellipse cx="680" cy="190" rx="88" ry="30" transform="rotate(-60 680 190)"></ellipse>
</g>
<circle cx="680" cy="190" r="10" fill="#fff"></circle>
<path fill="#a9d3f2" d="M1050,235 C1040,180 1080,130 1150,118 C1220,108 1260,150 1255,195 C1250,240 1200,275 1130,275 C1100,275 1090,250 1070,255 C1058,258 1052,250 1050,235Z"></path>
<circle cx="1138" cy="213" r="12" fill="#3a1a22"></circle>
<circle cx="1083" cy="200" r="16" fill="#e8402a"></circle>
<circle cx="1118" cy="160" r="15" fill="#5cb85c"></circle>
<circle cx="1165" cy="145" r="16" fill="#f0b830"></circle>
<path d="M1160,298 L1235,130" stroke="#d89a3a" stroke-width="16" stroke-linecap="round"></path>
<path d="M1222,110 L1270,95 L1255,130 Z" fill="#e6b470"></path>
<circle cx="1640" cy="190" r="110" fill="#fff"></circle>
<circle cx="1640" cy="190" r="101" fill="#6f3da2"></circle>
<path fill="#f2f2f2" d="M1618,300 L1618,272 C1616,262 1608,256 1598,252 C1578,246 1572,228 1572,198 C1572,178 1578,165 1588,156 C1585,145 1586,132 1590,124 C1603,125 1614,132 1622,139 C1634,135 1648,135 1660,139 C1668,132 1680,125 1692,124 C1696,132 1697,145 1694,156 C1704,165 1710,178 1710,198 C1710,228 1702,246 1684,252 C1674,256 1666,262 1664,272 L1664,300Z"></path><path d="M1570,240 C1585,245 1590,262 1615,268" fill="none" stroke="#f2f2f2" stroke-width="10"></path>
</g>
<!-- tray -->
<path d="M1609,1053.75 L1617.9,1044.6 L1626.7,1053.75" fill="none" stroke="#fff" stroke-width="1.3"></path>
<g fill="#fff">
<path d="M1642.1,1042.9 L1647.9,1039.4 L1653.7,1042.9 L1647.9,1046.4Z"></path>
<path d="M1654.2,1042.9 L1660,1039.4 L1665.8,1042.9 L1660,1046.4Z"></path>
<path d="M1642.1,1050.6 L1647.9,1047.1 L1653.7,1050.6 L1647.9,1054.1Z"></path>
<path d="M1654.2,1050.6 L1660,1047.1 L1665.8,1050.6 L1660,1054.1Z"></path>
<path d="M1648.2,1056.7 L1654,1053.2 L1659.8,1056.7 L1654,1060.2Z"></path>
</g>
<path fill="#fff" d="M1858,1038 H1882 V1057 H1867 L1863,1061 V1057 H1858Z"></path>
<g stroke="#3e1a1b" stroke-width="1"><path d="M1863,1043.3H1877M1863,1047.3H1877M1863,1051.4H1877"></path></g>
<circle cx="1880.9" cy="1061.4" r="14.5" fill="#262122" fill-opacity="0.62" stroke="#8a8080" stroke-width="1.2"></circle>
<text x="1881" y="1068" font-family="Liberation Sans" font-weight="bold" font-size="18.5" fill="#fff" text-anchor="middle">28</text>
</svg>

<div class="a" style="left: 132.6px; top: 1041.4px; letter-spacing: 0.153px; color: rgb(30, 30, 30); font-size: 22px; visibility: visible;">Type here to search</div>
<div class="a" style="left: 1679.4px; top: 1042.2px; color: rgb(255, 255, 255); font-size: 18.5px; visibility: visible; letter-spacing: -0.9px;">HUN</div>
<div class="a" style="left: 1761.4px; top: 1028.1px; letter-spacing: -0.79px; color: rgb(255, 255, 255); font-size: 18.5px; visibility: visible;">15:36</div>
<div class="a" style="left: 1735.4px; top: 1055.25px; letter-spacing: 0.122px; color: rgb(255, 255, 255); font-size: 18.5px; visibility: visible;">31/10/2019</div>
<div class="r" style="left:1913px;top:1020px;width:1px;height:60px;background:#8a8080"></div>

</body></html>
